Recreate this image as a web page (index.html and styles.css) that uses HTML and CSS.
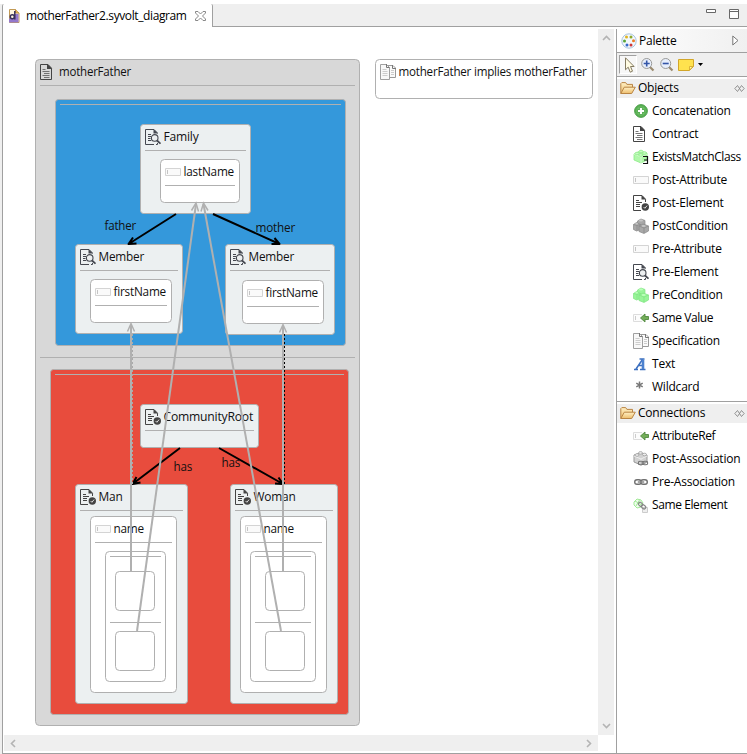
FILE: index.html
```
<!DOCTYPE html>
<html lang="en">
<head>
<meta charset="utf-8">
<title>motherFather2.syvolt_diagram</title>
<link rel="stylesheet" href="styles.css">
</head>
<body>
<svg class="defs" width="0" height="0" aria-hidden="true">
  <defs>
    <linearGradient id="gold" x1="0" y1="0" x2="0" y2="1"><stop offset="0" stop-color="#fff0c4"/><stop offset="1" stop-color="#edbd6c"/></linearGradient>
    <radialGradient id="plusFill"><stop offset="0" stop-color="#a4e293"/><stop offset="1" stop-color="#48a545"/></radialGradient>
    <symbol id="doc" viewBox="0 0 16 16"><path d="M2.500.500h7.500l3.500 3.700v11.300h-11z" fill="none" stroke="#444"/><path d="M9 .5v4.500h4.500v-1L10 .5z" fill="#444"/><path d="M4.500 5.500h3M4.500 7.500h7M6 9.500h5.500M4.500 11.500h7M6 13.500h5.500" stroke="#666" stroke-width=".9"/></symbol>
    <symbol id="search" viewBox="0 0 16 16"><path d="M12.500 4.500V4L9 .5H.5v15H9M12.500 14v1.500H11" fill="none" stroke="#454850"/><path d="M8.500 .5v4h4V4L9 .5z" fill="#454850"/><path d="M3 5.500h3M3 7.500h3M3 9.500h2.500M3 11.500h3" stroke="#454850"/><circle cx="9.700" cy="8.900" r="3.300" fill="#eceff0" stroke="#454850" stroke-width="1.100"/><path d="M12 11.500l3.500 3.200" stroke="#454850" stroke-width="1.800"/></symbol>
    <symbol id="check" viewBox="0 0 16 16"><path d="M12.500 7V4.200L9 .5H.5v15H8" fill="none" stroke="#444"/><path d="M8.500 .5v4h4V4L9 .5z" fill="#444"/><path d="M3 5.500h3M3 7.500h6M3 9.500h4M3 11.500h4" stroke="#444"/><circle cx="12.300" cy="12" r="3.700" fill="#444"/><path d="M10.600 12l1.300 1.300 2.200-2.700" fill="none" stroke="#ddd"/></symbol>
    <symbol id="attr" viewBox="0 0 16 16"><path d="M.5 4.500h15v7H.5z" fill="#fafafa" stroke="#d4d4d4"/><path d="M2.500 6v4" stroke="#c4c4c4"/></symbol>
    <symbol id="spec" viewBox="0 0 16 16"><path d="M7 1.500h6l2.500 2.500v9.500H7z" fill="#fafafa" stroke="#999"/><path d="M12.500 1v3.500H16" fill="none" stroke="#777"/><path d="M.5.500h6l3 3v12H.5z" fill="#f8f8f8" stroke="#a0a0a0"/><path d="M6.500 0v3.500h3" fill="none" stroke="#777"/><path d="M2.500 5.500h4M2.500 7.500h5M2.500 9.500h5M2.500 11.500h5M11 6.500h3M11 8.500h3M11 10.500h3" stroke="#ccc"/></symbol>
    <symbol id="folder" viewBox="0 0 16 16"><path d="M.8 13.500V3.600l1-1h3.900l1.200 1.800h5.600v3" fill="url(#gold)" stroke="#b98544"/><path d="M.8 13.500l3.500-6.300h11l-3.600 6.300z" fill="url(#gold)" stroke="#b98544" stroke-linejoin="round"/></symbol>
    <symbol id="plus" viewBox="0 0 16 16"><circle cx="8" cy="8" r="6.400" fill="url(#plusFill)" stroke="#55a552"/><path d="M8 4.500v7M4.500 8h7" stroke="#4ba449" stroke-width="3.600"/><path d="M8 5v6M5 8h6" stroke="#fff" stroke-width="2.200"/></symbol>
    <symbol id="bricks" viewBox="0 0 16 16"><path d="M1 5l6-3 7 2v7l-6 3-7-3z" fill="#b0f8aa" stroke="#8ceb86" stroke-width=".8"/><path d="M1 5l7 3 6-3M8 8v6" fill="none" stroke="#d5fbd0"/><g fill="#c9fbc4" stroke="#8ceb86" stroke-width=".7"><ellipse cx="4" cy="4.500" rx="2" ry="1.300"/><ellipse cx="8" cy="2.500" rx="2" ry="1.300"/><ellipse cx="11.500" cy="4" rx="2" ry="1.300"/><ellipse cx="7.700" cy="6" rx="2" ry="1.300"/></g></symbol>
    <symbol id="exists" viewBox="0 0 16 16"><use href="#bricks"/><path d="M10 7.500h4.500v7H10M11 11h3" fill="none" stroke="#111" stroke-width="1.200"/></symbol>
    <symbol id="cubes" viewBox="0 0 16 16"><g stroke-width=".7" stroke="var(--edge)"><path d="M4.500 3l3.500-2 4 1.500v5l-4 2-3.500-2z" fill="var(--cube)"/><path d="M.5 6.500l3-2 4 2v5l-4 1.500-3-1.500z" fill="var(--cube)"/><path d="M6 8l4-2 5.500 2v5L11 15.500 6 13.500z" fill="var(--cube)"/><path d="M6 8l5 2 4.500-2M11 10v5M.5 6.500l3.500 1 3.500-1M4 7.500v5" fill="none"/></g><g fill="var(--stud)"><ellipse cx="8" cy="2.500" rx="2" ry="1"/><ellipse cx="3.700" cy="5.800" rx="1.500" ry=".8"/><ellipse cx="10.700" cy="8" rx="2" ry="1"/></g></symbol>
    <symbol id="back" viewBox="0 0 16 16"><path d="M9 4.500H.5v7H9" fill="#fcfcfc" stroke="#ddd"/><path d="M2.500 6v4" stroke="#ccc"/><path d="M7.500 8l4.500-4v2.500h3.500v3H12V12z" fill="#73ad58" stroke="#50893f" stroke-width=".9"/></symbol>
    <symbol id="chain" viewBox="0 0 16 16"><rect x="1.700" y="5.700" width="6.500" height="4.600" rx="2.300" fill="none" stroke="#707070" stroke-width="1.400"/><rect x="7.800" y="5.700" width="6.500" height="4.600" rx="2.300" fill="none" stroke="#707070" stroke-width="1.400"/><path d="M4.800 8h6.400" stroke="#888" stroke-width="1.500"/></symbol>
    <symbol id="postassoc" viewBox="0 0 16 16"><path d="M1 4l6-2 7 2v7l-6 3-7-3z" fill="#d2d2d2" stroke="#999"/><path d="M1 5l7 3 6-3M8 8v6" fill="none" stroke="#eee"/><g fill="#eee" stroke="#999" stroke-width=".7"><ellipse cx="4" cy="4" rx="2" ry="1.300"/><ellipse cx="7.500" cy="1.900" rx="2" ry="1.300"/><ellipse cx="11.500" cy="3.500" rx="2" ry="1.300"/></g><use href="#chain" x="4" y="6" width="12" height="12"/></symbol>
    <symbol id="same" viewBox="0 0 16 16"><path d="M1 5l3-3 4 1 2 3-2 4-4 1-3-3zM2 4l7 4M7 2l-4 7" fill="#efffed" stroke="#a1e997"/><path d="M9.500 10.500h5v5h-5z" fill="#eee" stroke="#ccc"/><g transform="rotate(40 9 9)"><rect x="4.500" y="7" width="4.500" height="3.300" rx="1.600" fill="none" stroke="#888" stroke-width="1.200"/><rect x="8.500" y="7" width="4.500" height="3.300" rx="1.600" fill="none" stroke="#888" stroke-width="1.200"/></g></symbol>
    <symbol id="letter" viewBox="0 0 16 16"><path d="M1 13.500h4M7 13.500h5.500M3 13L9.500 3.500M5.500 9.500h4.500M6.500 3h5" fill="none" stroke="#3c70c0" stroke-width="1.500"/><path d="M10 3.500v9.500" stroke="#4d82cf" stroke-width="2.600"/></symbol>
    <symbol id="star" viewBox="0 0 16 16"><path d="M6.500 2.500v7M3.300 4.200l6.400 3.600M9.700 4.200L3.300 7.800" stroke="#777" stroke-width="1.500"/></symbol>
    <symbol id="pin" viewBox="0 0 11 9"><path d="M3.500 1.500L.8 4.500l2.700 3M7.500 1.500l2.700 3-2.700 3M3.500 1.500l4 6M7.500 1.500l-4 6" fill="none" stroke="#888" stroke-width=".9"/></symbol>
    <symbol id="lens" viewBox="0 0 16 16"><path d="M10 10l3.500 3.500" stroke="#9b8b70" stroke-width="2.200"/><circle cx="6.700" cy="6.500" r="5" fill="#e7eefb" stroke="#9a9a98"/></symbol>
  </defs>
</svg>

<div class="workbench">
  <header class="tabbar">
    <div class="tab">
      <svg width="12" height="14" viewBox="0 0 12 14"><path d="M1.500.5h6L11 4v9.500H1.500z" fill="#fff5df" stroke="#c29a55"/><path d="M7.500.5V4H11" fill="#e7b35a" stroke="#b88e45"/><path d="M1 9.500h9.500v4H1zM7 5h3.500v8H7z" fill="#9478cc"/><circle cx="4.300" cy="7.700" r="2" fill="none" stroke="#382f59" stroke-width="1.500"/><path d="M6.800 2v8.500" stroke="#382f59" stroke-width="1.500"/></svg>
      <span class="tab-name">motherFather2.syvolt_diagram</span>
      <svg class="close" width="11" height="10" viewBox="0 0 11 10"><path d="M.5.500h2.500l2.500 2.500L8 .5h2.500V2L7.500 5l3 3v1.500H8L5.500 7 3 9.500H.5V8l3-3-3-3z" fill="#fff" stroke="#888"/></svg>
    </div>
    <svg class="window-buttons" width="34" height="11" viewBox="0 0 34 11"><path d="M.5.500h9v3h-9zM23.500.500h9v9h-9zM23.500 2.500h9" fill="#fff" stroke="#686868"/></svg>
  </header>

  <div class="editor">
    <main class="sheet">
      <svg class="diagram" width="594" height="706" viewBox="4 29 594 706">
        <g class="frame">
          <rect class="contract" x="35.500" y="59.500" width="324" height="666" rx="4"/>
          <path d="M40 85.500h315M40 357.500h315"/>
          <rect class="match" x="55.500" y="99.500" width="290" height="246" rx="3"/>
          <path d="M60 104.500h281"/>
          <rect class="apply" x="50.500" y="369.500" width="298" height="345" rx="3"/>
          <path d="M55 374.500h289"/>
          <rect class="leaf" x="375.500" y="59.500" width="217" height="39" rx="4"/>

          <rect class="element" x="140.500" y="124.500" width="110" height="89" rx="3"/>
          <path d="M145 150.500h101"/>
          <rect class="leaf" x="160.500" y="159.500" width="79" height="43" rx="4"/>
          <path d="M165 185.500h70"/>

          <rect class="element" x="75.500" y="244.500" width="107" height="89" rx="3"/>
          <path d="M80 270.500h98"/>
          <rect class="leaf" x="90.500" y="279.500" width="81" height="43" rx="4"/>
          <path d="M95 305.500h72"/>

          <rect class="element" x="225.500" y="244.500" width="109" height="90" rx="3"/>
          <path d="M230 270.500h100"/>
          <rect class="leaf" x="242.500" y="280.500" width="81" height="43" rx="4"/>
          <path d="M247 306.500h72"/>

          <rect class="element" x="140.500" y="404.500" width="118" height="43" rx="3"/>
          <path d="M145 430.500h109"/>

          <rect class="element" x="75.500" y="484.500" width="112" height="219" rx="3"/>
          <path d="M80 510.500h103"/>
          <rect class="leaf" x="90.500" y="516.500" width="86" height="176" rx="4"/>
          <path d="M95 542.500h77"/>
          <rect class="leaf" x="105.500" y="551.500" width="60" height="130" rx="4"/>
          <path d="M110 556.500h51M110 622.500h51"/>
          <rect class="leaf" x="115.500" y="571.500" width="39" height="39" rx="4"/>
          <rect class="leaf" x="115.500" y="631.500" width="39" height="39" rx="4"/>

          <rect class="element" x="230.500" y="484.500" width="107" height="219" rx="3"/>
          <path d="M235 510.500h98"/>
          <rect class="leaf" x="240.500" y="516.500" width="86" height="176" rx="4"/>
          <path d="M245 542.500h77"/>
          <rect class="leaf" x="250.500" y="551.500" width="65" height="130" rx="4"/>
          <path d="M255 556.500h56M255 622.500h56"/>
          <rect class="leaf" x="265.500" y="571.500" width="39" height="39" rx="4"/>
          <rect class="leaf" x="265.500" y="631.500" width="39" height="39" rx="4"/>
        </g>

        <g>
          <use href="#doc" x="38" y="64" width="16" height="16"/>
          <use href="#spec" x="380" y="64" width="16" height="16"/>
          <use href="#search" x="145" y="129" width="16" height="16"/>
          <use href="#attr" x="165" y="164" width="16" height="16"/>
          <use href="#search" x="80" y="249" width="16" height="16"/>
          <use href="#attr" x="95" y="284" width="16" height="16"/>
          <use href="#search" x="230" y="249" width="16" height="16"/>
          <use href="#attr" x="247" y="285" width="16" height="16"/>
          <use href="#check" x="145" y="409" width="16" height="16"/>
          <use href="#check" x="80" y="489" width="16" height="16"/>
          <use href="#attr" x="95" y="521" width="16" height="16"/>
          <use href="#check" x="235" y="489" width="16" height="16"/>
          <use href="#attr" x="245" y="521" width="16" height="16"/>
        </g>

        <g class="label">
          <text x="59" y="76" textLength="72" lengthAdjust="spacingAndGlyphs">motherFather</text>
          <text x="398.500" y="76" textLength="188" lengthAdjust="spacingAndGlyphs">motherFather implies motherFather</text>
          <text x="163.500" y="141" textLength="35" lengthAdjust="spacingAndGlyphs">Family</text>
          <text x="183.500" y="176" textLength="50.500" lengthAdjust="spacingAndGlyphs">lastName</text>
          <text x="98.500" y="261" textLength="45.500" lengthAdjust="spacingAndGlyphs">Member</text>
          <text x="113.500" y="296" textLength="52.500" lengthAdjust="spacingAndGlyphs">firstName</text>
          <text x="248.500" y="261" textLength="45.500" lengthAdjust="spacingAndGlyphs">Member</text>
          <text x="265.500" y="297" textLength="52.500" lengthAdjust="spacingAndGlyphs">firstName</text>
          <text x="163.500" y="421" textLength="89.500" lengthAdjust="spacingAndGlyphs">CommunityRoot</text>
          <text x="98.500" y="501" textLength="24" lengthAdjust="spacingAndGlyphs">Man</text>
          <text x="113.500" y="533" textLength="30.500" lengthAdjust="spacingAndGlyphs">name</text>
          <text x="253.500" y="501" textLength="42" lengthAdjust="spacingAndGlyphs">Woman</text>
          <text x="263.500" y="533" textLength="30.500" lengthAdjust="spacingAndGlyphs">name</text>
        </g>

        <g class="relation">
          <path d="M176 214L128.500 244M136.500 243.500l-8 .5 4.500-6.500"/>
          <path d="M213 214L279.500 244M271.500 244l8 0-5-6"/>
          <path d="M180 448L132.500 484M140.500 482.500l-8 1.500 4-7"/>
          <path d="M219 448L283 484M275 483.500l8 .5-4.500-6.500"/>
        </g>
        <path class="trace faint" d="M132.500 334V484"/>
        <path class="trace" d="M284.500 334V484"/>
        <g class="reference">
          <path d="M131 571V324"/><path d="M137 631L196 204"/><path d="M281 631L203.500 204"/><path d="M283 571V325"/>
        </g>
        <g class="heads"><path d="M127.500 331.500l3.500-8 3.500 8M279.500 332.500l3.500-8 3.500 8M191.500 210.500l4.500-7.500 2.500 8.500M201 211.500l2.500-8.500 4.500 7.500"/></g>
        <g class="label">
          <text x="104.500" y="230" textLength="31.500" lengthAdjust="spacingAndGlyphs">father</text>
          <text x="255.500" y="232" textLength="39.500" lengthAdjust="spacingAndGlyphs">mother</text>
          <text x="173.500" y="471" textLength="18.500" lengthAdjust="spacingAndGlyphs">has</text>
          <text x="221.500" y="467" textLength="18.500" lengthAdjust="spacingAndGlyphs">has</text>
        </g>
      </svg>
      <div class="vbar"><svg width="9" height="6" viewBox="0 0 9 6"><path d="M1 5l3.500-3.500L8 5"/></svg><svg width="9" height="6" viewBox="0 0 9 6"><path d="M1 1l3.500 3.500L8 1"/></svg></div>
      <div class="hbar"><svg width="6" height="9" viewBox="0 0 6 9"><path d="M5 1L1.500 4.500 5 8"/></svg><svg width="6" height="9" viewBox="0 0 6 9"><path d="M1 1l3.500 3.500L1 8"/></svg></div>
    </main>

    <aside class="palette">
      <div class="palette-title">
        <svg width="16" height="16" viewBox="0 0 16 16"><circle cx="8" cy="8" r="7.200" fill="#f2f7fc" stroke="#a9c5df"/><circle cx="5.500" cy="4" r="1.500" fill="#e0b31f"/><circle cx="10" cy="4" r="1.500" fill="#8da82b"/><circle cx="3.500" cy="8" r="1.500" fill="#56a535"/><circle cx="12.500" cy="7.800" r="1.500" fill="#ef7b22"/><circle cx="6" cy="12" r="1.500" fill="#3468cb"/><circle cx="10" cy="12" r="1.500" fill="#cf3434"/></svg>
        <span>Palette</span>
        <svg class="flyout" width="7" height="11" viewBox="0 0 7 11"><path d="M.8 1v9L6 5.500z" fill="#fff" stroke="#777"/></svg>
      </div>
      <div class="tools">
        <span class="tool active"><svg width="16" height="16" viewBox="0 0 16 16"><path d="M4.500.8v12l2.700-2.600 2 5 2.300-1-2-4.700h3.600z" fill="#fffbe2" stroke="#857b62"/></svg></span>
        <svg width="16" height="16"><use href="#lens"/><path d="M6.700 3.500v6M3.700 6.500h6" stroke="#3355a8" stroke-width="1.600"/></svg>
        <svg width="16" height="16"><use href="#lens"/><path d="M3.700 6.500h6" stroke="#3355a8" stroke-width="1.600"/></svg>
        <svg width="16" height="12" viewBox="0 0 16 12"><path d="M.5.500h15v7l-4 4H.5z" fill="#ffe24e" stroke="#d2a629"/><path d="M11.500 11V7.500H15z" fill="#fff5ad" stroke="#d2a629" stroke-width=".8"/></svg>
        <svg width="5" height="3"><path d="M0 0h5L2.500 3z"/></svg>
      </div>
      <section class="drawer">
        <h2><svg width="16" height="16"><use href="#folder"/></svg><span>Objects</span><svg class="pin" width="11" height="9"><use href="#pin"/></svg></h2>
        <ul>
          <li><svg><use href="#plus"/></svg><span>Concatenation</span></li>
          <li><svg><use href="#doc" x="-2"/></svg><span>Contract</span></li>
          <li><svg><use href="#exists"/></svg><span class="tight">ExistsMatchClass</span></li>
          <li><svg><use href="#attr"/></svg><span>Post-Attribute</span></li>
          <li><svg><use href="#check"/></svg><span>Post-Element</span></li>
          <li><svg class="grey"><use href="#cubes"/></svg><span>PostCondition</span></li>
          <li><svg><use href="#attr"/></svg><span>Pre-Attribute</span></li>
          <li><svg><use href="#search"/></svg><span>Pre-Element</span></li>
          <li><svg class="green"><use href="#cubes"/></svg><span>PreCondition</span></li>
          <li><svg><use href="#back"/></svg><span class="tight">Same Value</span></li>
          <li><svg><use href="#spec"/></svg><span>Specification</span></li>
          <li><svg><use href="#letter"/></svg><span>Text</span></li>
          <li><svg><use href="#star"/></svg><span>Wildcard</span></li>
        </ul>
      </section>
      <section class="drawer">
        <h2><svg width="16" height="16"><use href="#folder"/></svg><span>Connections</span><svg class="pin" width="11" height="9"><use href="#pin"/></svg></h2>
        <ul>
          <li><svg><use href="#back"/></svg><span class="tight">AttributeRef</span></li>
          <li><svg><use href="#postassoc"/></svg><span>Post-Association</span></li>
          <li><svg><use href="#chain"/></svg><span>Pre-Association</span></li>
          <li><svg><use href="#same"/></svg><span class="tight">Same Element</span></li>
        </ul>
      </section>
    </aside>
  </div>
</div>
</body>
</html>
```
FILE: styles.css
```
* { box-sizing: border-box; }
body {
  margin: 0;
  background: #fff;
  color: #000;
  font: 12px/16px "Open Sans", "Noto Sans", sans-serif;
  letter-spacing: -0.22px;
  overflow: hidden;
}
svg { display: block; flex: none; }
.defs { display: block; height: 0; }

.workbench {
  display: flex;
  flex-direction: column;
  width: 747px;
  height: 754px;
  padding-top: 4px;
}
.tabbar {
  display: flex;
  justify-content: space-between;
  flex: none;
  height: 23px;
  padding-left: 2px;
  background: #efefef;
}
.tab {
  display: flex;
  align-items: center;
  width: 211px;
  padding: 0 0 0 5px;
  background: #fff;
  border-left: 1px solid #a0a0a0;
  border-right: 1px solid #a0a0a0;
  border-radius: 2px 2px 0 0;
}
.tab-name {
  width: 161px;
  margin-left: 6px;
  letter-spacing: -0.39px;
  white-space: nowrap;
}
.close { margin-left: 8px; }
.tabbar::after {
  content: "";
  order: 1;
  flex: 1;
  border-bottom: 1px solid #a0a0a0;
}
.window-buttons {
  order: 2;
  width: 41px;
  height: 23px;
  padding: 5px 7px 6px 0;
  border-bottom: 1px solid #a0a0a0;
}

.editor {
  display: flex;
  flex: 1;
  min-height: 0;
  margin-left: 2px;
  padding-top: 2px;
  border-left: 1px solid #a0a0a0;
  border-bottom: 1px solid #a0a0a0;
  box-shadow: -2px 0 #efefef;
}
.sheet {
  display: grid;
  grid-template-columns: 594px 16px;
  grid-template-rows: 706px 16px;
  width: 613px;
  padding-left: 1px;
}
.vbar, .hbar {
  display: flex;
  align-items: center;
  justify-content: space-between;
  background: #efefef;
}
.vbar { flex-direction: column; padding: 6px 0; }
.hbar { padding: 0 6px; }
.vbar path, .hbar path { fill: none; stroke: #b4b4b4; stroke-width: 1.6; }

.frame { fill: none; stroke: #b0b0b0; }
.contract { fill: #d8d8d8; }
.match { fill: #3498db; }
.apply { fill: #e84c3d; }
.element { fill: #ecf0f1; }
.leaf { fill: #fff; }
.label { fill: #111; }
.relation { fill: none; stroke: #000; stroke-width: 2; }
.reference { fill: none; stroke: #b0b0b0; stroke-width: 2; }
.heads { fill: none; stroke: #b0b0b0; stroke-width: 1.5; }
.relation path { stroke-linejoin: round; }
.trace { fill: none; stroke: #000; stroke-dasharray: 2 2; }
.faint { stroke: #aaa; }

.palette { flex: 1; min-width: 0; border-left: 1px solid #a0a0a0; }
.palette-title {
  display: flex;
  align-items: center;
  height: 24px;
  padding: 0 8px 0 4px;
  border-bottom: 1px solid #a0a0a0;
  background: linear-gradient(90deg, #fff, #f0f0f0);
}
.palette-title span { margin-left: 2px; }
.flyout { margin-left: auto; }
.tools {
  display: flex;
  align-items: center;
  height: 24px;
  padding-left: 2px;
  gap: 3px;
  background: #efefef;
  border-bottom: 1px solid #a0a0a0;
}
.tool {
  display: flex;
  align-items: center;
  width: 18px;
  height: 19px;
  background: #f7f7f7;
  border: 1px solid #fff;
  border-color: #a0a0a0 #fff #fff #a0a0a0;
}
.tools svg:last-child { margin-left: 1px; }
.drawer { padding-top: 2px; }
.drawer + .drawer { border-top: 1px solid #a0a0a0; }
.drawer h2 {
  display: flex;
  align-items: center;
  height: 19px;
  margin: 0;
  padding: 0 2px 1px 3px;
  background: #efefef;
  font: inherit;
}
.drawer h2 span { margin-left: 2px; }
.pin { margin-left: auto; }
.drawer ul { margin: 0; padding: 1px 0 3px; list-style: none; }
.drawer li {
  display: flex;
  align-items: center;
  height: 23px;
  padding-left: 16px;
  white-space: nowrap;
}
.drawer li svg { width: 16px; height: 16px; margin-right: 3px; }
.drawer li .tight { letter-spacing: -0.4px; }
.grey { --cube: #a8a8a8; --edge: #888; --stud: #c6c6c6; }
.green { --cube: #98f598; --edge: #80e482; --stud: #bcffba; }
```
